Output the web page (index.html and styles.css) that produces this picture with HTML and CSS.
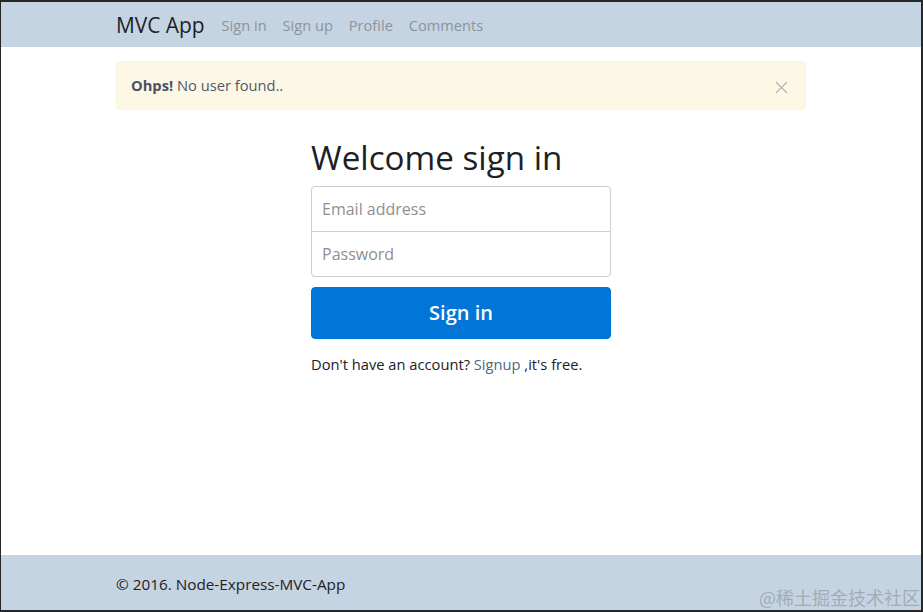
FILE: index.html
```html
<!DOCTYPE html>
<html lang="en">
<head>
<meta charset="utf-8">
<title>MVC App</title>
<link rel="stylesheet" href="styles.css">
</head>
<body>
<div class="frame">
  <nav class="navbar">
    <div class="container nav-inner">
      <a class="brand" href="#">MVC App</a>
      <ul class="nav-links">
        <li><a href="#">Sign in</a></li>
        <li><a href="#">Sign up</a></li>
        <li><a href="#">Profile</a></li>
        <li><a href="#">Comments</a></li>
      </ul>
    </div>
  </nav>

  <main class="main">
    <div class="container">
      <div class="alert">
        <p class="alert-text"><strong>Ohps!</strong> No user found..</p>
        <button class="close" type="button" aria-label="Close">
          <svg width="13" height="13" viewBox="0 0 13 13"><path d="M1 1 L12 12 M12 1 L1 12" stroke="#b4b4b4" stroke-width="1.2" fill="none"/></svg>
        </button>
      </div>

      <form class="signin">
        <h2 class="signin-title">Welcome sign in</h2>
        <input class="field field-top" type="email" placeholder="Email address">
        <input class="field field-bottom" type="password" placeholder="Password">
        <button class="btn-primary" type="button">Sign in</button>
        <p class="signup-note">Don't have an account? <a href="#">Signup</a> ,it's free.</p>
      </form>
    </div>
  </main>

  <footer class="footer">
    <div class="container">
      <p class="footer-text">© 2016. Node-Express-MVC-App</p>
    </div>
    <span class="watermark">@稀土掘金技术社区</span>
  </footer>
</div>
</body>
</html>
```

FILE: styles.css
```css
* { box-sizing: border-box; }

html, body {
  margin: 0;
  padding: 0;
  background: #fff;
}

body {
  font-family: "Open Sans", "DejaVu Sans", sans-serif;
  font-size: 14.7px;
  color: #1f2328;
}

.frame {
  height: 612px;
  display: flex;
  flex-direction: column;
  border-style: solid;
  border-color: #262626;
  border-width: 2px 2px 2px 1px;
  background: #fff;
}

.container {
  width: 690px;
  margin: 0 auto;
}

/* Navbar */
.navbar {
  background: #c5d4e3;
  height: 45px;
  flex: none;
}

.nav-inner {
  display: flex;
  align-items: center;
  height: 100%;
}

.brand {
  font-size: 20.9px;
  color: #1d2126;
  text-decoration: none;
  margin-right: 17px;
  line-height: 1;
  position: relative;
  top: 1px;
}

.nav-links {
  list-style: none;
  margin: 0;
  padding: 0;
  display: flex;
  gap: 16px;
}

.nav-links a {
  font-size: 14.6px;
  color: #8c939c;
  text-decoration: none;
}

/* Main */
.main {
  flex: 1;
}

.alert {
  margin-top: 14px;
  margin-bottom: 30px;
  background: #fdf8e6;
  border: 1px solid #faf4df;
  border-radius: 4px;
  padding: 14px 17px 14px 14px;
  display: flex;
  align-items: center;
  justify-content: space-between;
}

.alert-text {
  margin: 0;
  line-height: 19px;
  color: #4f5866;
}

.alert-text strong {
  color: #4a5261;
}

.close {
  border: 0;
  background: transparent;
  padding: 0;
  width: 13px;
  height: 13px;
  display: flex;
  position: relative;
  top: 2px;
}

.signin {
  width: 300px;
  margin: 0 auto;
  display: flex;
  flex-direction: column;
}

.signin-title {
  font-size: 33.2px;
  font-weight: 400;
  line-height: 1.08;
  margin: 0 0 10px;
  color: #1d2126;
}

.field {
  height: 46px;
  border: 1px solid #cdcdcd;
  padding: 0 10px;
  font-family: "Open Sans", "DejaVu Sans", sans-serif;
  font-size: 16px;
  color: #333;
  background: #fff;
  outline: none;
}

.field::placeholder {
  color: #8f8f8f;
}

.field-top {
  border-radius: 4px 4px 0 0;
}

.field-bottom {
  margin-top: -1px;
  border-radius: 0 0 4px 4px;
}

.btn-primary {
  margin-top: 10px;
  height: 52px;
  background: #0275d8;
  border: 1px solid #0275d8;
  border-radius: 4px;
  color: #fff;
  font-family: "Open Sans", "DejaVu Sans", sans-serif;
  font-size: 20px;
  font-weight: 600;
}

.signup-note {
  margin: 15px 0 0;
  line-height: 21px;
  color: #1d2126;
}

.signup-note a {
  color: #4f6882;
  text-decoration: none;
}

/* Footer */
.footer {
  background: #c5d4e3;
  height: 55px;
  flex: none;
  position: relative;
}

.footer-text {
  margin: 0;
  padding-top: 19px;
  font-size: 15.3px;
  line-height: 20px;
  color: #222;
}

.watermark {
  position: absolute;
  right: 1px;
  bottom: 1px;
  font-family: "Noto Sans CJK SC", sans-serif;
  font-size: 18px;
  line-height: 24px;
  color: #a3acb5;
}
```
